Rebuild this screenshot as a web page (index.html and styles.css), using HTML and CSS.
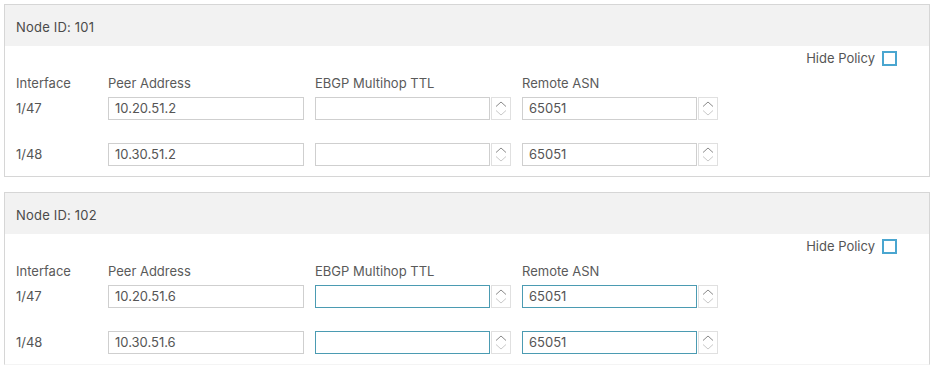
FILE: index.html
```html
<!DOCTYPE html>
<html>
<head>
  <title>BGP Peers</title>
  <link rel="stylesheet" href="styles.css">
</head>
<body>
  <div class="panel">
    <div class="panel-header">Node ID: 101</div>
    <div class="panel-body">
      <div class="hide-row">
        <span>Hide Policy</span>
        <span class="checkbox"></span>
      </div>
      <div class="peer-grid">
        <div class="label">Interface</div>
        <div class="label">Peer Address</div>
        <div class="label">EBGP Multihop TTL</div>
        <div class="label">Remote ASN</div>

        <div class="iface">1/47</div>
        <div class="field"><div class="input">10.20.51.2</div></div>
        <div class="field"><div class="input"></div><div class="spin"></div></div>
        <div class="field"><div class="input">65051</div><div class="spin"></div></div>

        <div class="iface">1/48</div>
        <div class="field"><div class="input">10.30.51.2</div></div>
        <div class="field"><div class="input"></div><div class="spin"></div></div>
        <div class="field"><div class="input">65051</div><div class="spin"></div></div>
      </div>
    </div>
  </div>

  <div class="panel last">
    <div class="panel-header">Node ID: 102</div>
    <div class="panel-body">
      <div class="hide-row">
        <span>Hide Policy</span>
        <span class="checkbox"></span>
      </div>
      <div class="peer-grid">
        <div class="label">Interface</div>
        <div class="label">Peer Address</div>
        <div class="label">EBGP Multihop TTL</div>
        <div class="label">Remote ASN</div>

        <div class="iface">1/47</div>
        <div class="field"><div class="input">10.20.51.6</div></div>
        <div class="field"><div class="input focus"></div><div class="spin"></div></div>
        <div class="field"><div class="input focus">65051</div><div class="spin"></div></div>

        <div class="iface">1/48</div>
        <div class="field"><div class="input">10.30.51.6</div></div>
        <div class="field"><div class="input focus"></div><div class="spin"></div></div>
        <div class="field"><div class="input focus">65051</div><div class="spin"></div></div>
      </div>
    </div>
  </div>

  <script>
    // draw the up/down chevrons in every spinner box
    var chevrons =
      '<svg width="20" height="23" viewBox="0 0 20 23">' +
      '<path d="M5 9.5 L10 5 L15 9.5" fill="none" stroke="#8a8a8a" stroke-width="1"/>' +
      '<path d="M5 13.5 L10 18 L15 13.5" fill="none" stroke="#c9c9c9" stroke-width="1"/>' +
      '</svg>';
    document.querySelectorAll(".spin").forEach(function(el) {
      el.innerHTML = chevrons;
    });
  </script>
</body>
</html>
```

FILE: styles.css
```css
body {
  margin: 0;
  padding: 4px 5px 0 4px;
  font-family: Inter, "Noto Sans", sans-serif;
  font-size: 13px;
  color: #555;
  background-color: #fff;
}

.panel {
  border: 1px solid #d6d6d6;
  margin-bottom: 15px;
}

.panel.last {
  margin-bottom: 0;
  border-bottom-color: #f4f4f4;
}

.panel-header {
  height: 41px;
  line-height: 45px;
  padding-left: 11px;
  background-color: #f2f2f2;
  color: #4a4a4a;
  letter-spacing: 0.2px;
}

.panel-body {
  padding: 5px 32px 10px 11px;
}

.hide-row {
  display: flex;
  justify-content: flex-end;
  align-items: center;
  gap: 7px;
  height: 14px;
  line-height: 14px;
}

.checkbox {
  width: 11px;
  height: 11px;
  border: 2px solid #4aa6d0;
  background-color: #fff;
}

.peer-grid {
  display: grid;
  grid-template-columns: 81px 196px 196px 196px;
  grid-template-rows: 16px 29px 46px;
  column-gap: 11px;
  align-items: end;
  margin-top: 10px;
}

.label {
  line-height: 16px;
  color: #5a5a5a;
}

.iface {
  line-height: 23px;
}

.field {
  display: flex;
  height: 23px;
}

.input {
  flex: 1;
  border: 1px solid #cfcfcf;
  padding: 0 6px;
  line-height: 21px;
  color: #555;
  background-color: #fff;
}

.input.focus {
  border-color: #4b9bb2;
}

.spin {
  width: 18px;
  margin-left: 1px;
  border: 1px solid #e0e0e0;
  overflow: hidden;
}

.spin svg {
  display: block;
  margin: -1px 0 0 -1px;
}
```
